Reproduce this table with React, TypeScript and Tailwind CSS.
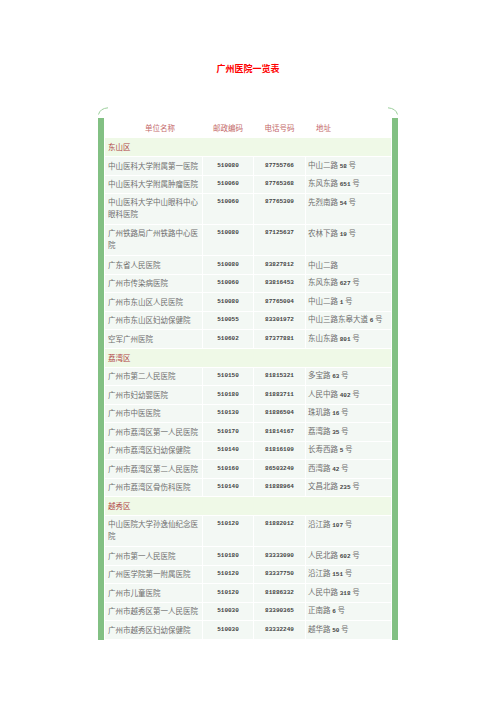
import React from "react";

type Row = { name: string; zip: string; tel: string; addr: string; tall?: boolean };
type Group = { district: string; rows: Row[] };

const groups: Group[] = [
  {
    district: "东山区",
    rows: [
      { name: "中山医科大学附属第一医院", zip: "510080", tel: "87755766", addr: "中山二路 58 号" },
      { name: "中山医科大学附属肿瘤医院", zip: "510060", tel: "87765368", addr: "东风东路 651 号" },
      { name: "中山医科大学中山眼科中心眼科医院", zip: "510060", tel: "87765309", addr: "先烈南路 54 号", tall: true },
      { name: "广州铁路局广州铁路中心医院", zip: "510080", tel: "87125637", addr: "农林下路 19 号", tall: true },
      { name: "广东省人民医院", zip: "510080", tel: "83827812", addr: "中山二路" },
      { name: "广州市传染病医院", zip: "510060", tel: "83816453", addr: "东风东路 627 号" },
      { name: "广州市东山区人民医院", zip: "510080", tel: "87765004", addr: "中山二路 1 号" },
      { name: "广州市东山区妇幼保健院", zip: "510055", tel: "83301972", addr: "中山三路东皋大道 6 号" },
      { name: "空军广州医院", zip: "510602", tel: "87377881", addr: "东山东路 801 号" },
    ],
  },
  {
    district: "荔湾区",
    rows: [
      { name: "广州市第二人民医院", zip: "510150", tel: "81815321", addr: "多宝路 63 号" },
      { name: "广州市妇幼婴医院", zip: "510180", tel: "81883711", addr: "人民中路 402 号" },
      { name: "广州市中医医院", zip: "510130", tel: "81886504", addr: "珠玑路 16 号" },
      { name: "广州市荔湾区第一人民医院", zip: "510170", tel: "81814167", addr: "荔湾路 35 号" },
      { name: "广州市荔湾区妇幼保健院", zip: "510140", tel: "81816109", addr: "长寿西路 5 号" },
      { name: "广州市荔湾区第二人民医院", zip: "510160", tel: "86503249", addr: "西湾路 42 号" },
      { name: "广州市荔湾区骨伤科医院", zip: "510140", tel: "81888964", addr: "文昌北路 235 号" },
    ],
  },
  {
    district: "越秀区",
    rows: [
      { name: "中山医院大学孙逸仙纪念医院", zip: "510120", tel: "81882012", addr: "沿江路 107 号", tall: true },
      { name: "广州市第一人民医院", zip: "510180", tel: "83333090", addr: "人民北路 602 号" },
      { name: "广州医学院第一附属医院", zip: "510120", tel: "83337750", addr: "沿江路 151 号" },
      { name: "广州市儿童医院", zip: "510120", tel: "81886332", addr: "人民中路 318 号" },
      { name: "广州市越秀区第一人民医院", zip: "510030", tel: "83390365", addr: "正南路 6 号" },
      { name: "广州市越秀区妇幼保健院", zip: "510030", tel: "83332249", addr: "越华路 50 号" },
    ],
  },
];

const Addr: React.FC<{ text: string }> = ({ text }) => (
  <>
    {text.split(/(\d+)/).map((part, i) =>
      /^\d+$/.test(part) ? (
        <span key={i} className="font-['Liberation_Mono',monospace] text-[6px] font-bold text-[#444]">
          {part}
        </span>
      ) : (
        <span key={i}>{part}</span>
      )
    )}
  </>
);

const Corner: React.FC<{ flip?: boolean }> = ({ flip }) => (
  <svg width="12" height="8" viewBox="0 0 12 8" className={flip ? "-scale-x-100" : ""}>
    <path d="M0.5 7.5 Q2 1.5 10 0.8" fill="none" stroke="#9ccf9c" strokeWidth="1" />
  </svg>
);

export default function App() {
  return (
    <div className="min-h-[702px] bg-white pt-[62px] font-['Noto_Sans_CJK_SC',sans-serif]">
      <h1 className="text-center text-[9px] leading-[14px] font-bold text-[#ff0000]">广州医院一览表</h1>

      <div className="mx-auto mt-[31px] w-[300px]">
        <div className="flex h-[11px] items-start justify-between">
          <Corner />
          <Corner flip />
        </div>
        <div className="border-x-[6px] border-[#82c083]">
          <table className="w-full table-fixed border-separate border-spacing-[1px] text-[7.5px]">
            <colgroup>
              <col className="w-[97px]" />
              <col className="w-[50px]" />
              <col className="w-[51px]" />
              <col />
            </colgroup>
            <thead>
              <tr className="h-[18px] text-[#c46a6a] font-normal">
                <th className="pl-[40px] text-left font-normal">单位名称</th>
                <th className="text-center font-normal">邮政编码</th>
                <th className="text-center font-normal">电话号码</th>
                <th className="pl-[10px] text-left font-normal">地址</th>
              </tr>
            </thead>
            <tbody>
              {groups.map((g) => (
                <React.Fragment key={g.district}>
                  <tr>
                    <td colSpan={4} className="h-[18px] bg-[#eff9e7] pl-[3px] align-middle text-[#b04545]">
                      {g.district}
                    </td>
                  </tr>
                  {g.rows.map((r) => {
                    const h = r.tall ? "h-[30px] align-top pt-[2px]" : "h-[17.5px] align-middle";
                    return (
                      <tr key={r.name} className="leading-[12px]">
                        <td className={`${h} bg-[#f3f8f4] pl-[3px] pr-[1px] text-[#6e6e6e]`}>{r.name}</td>
                        <td className={`${h} bg-[#f3f8f4] text-center font-['Liberation_Mono',monospace] text-[6px] font-bold text-[#444]`}>
                          {r.zip}
                        </td>
                        <td className={`${h} bg-[#f3f8f4] text-center font-['Liberation_Mono',monospace] text-[6px] font-bold text-[#444]`}>
                          {r.tel}
                        </td>
                        <td className={`${h} bg-[#f3f8f4] pl-[2px] text-[#6e6e6e]`}>
                          <Addr text={r.addr} />
                        </td>
                      </tr>
                    );
                  })}
                </React.Fragment>
              ))}
            </tbody>
          </table>
        </div>
      </div>
    </div>
  );
}
